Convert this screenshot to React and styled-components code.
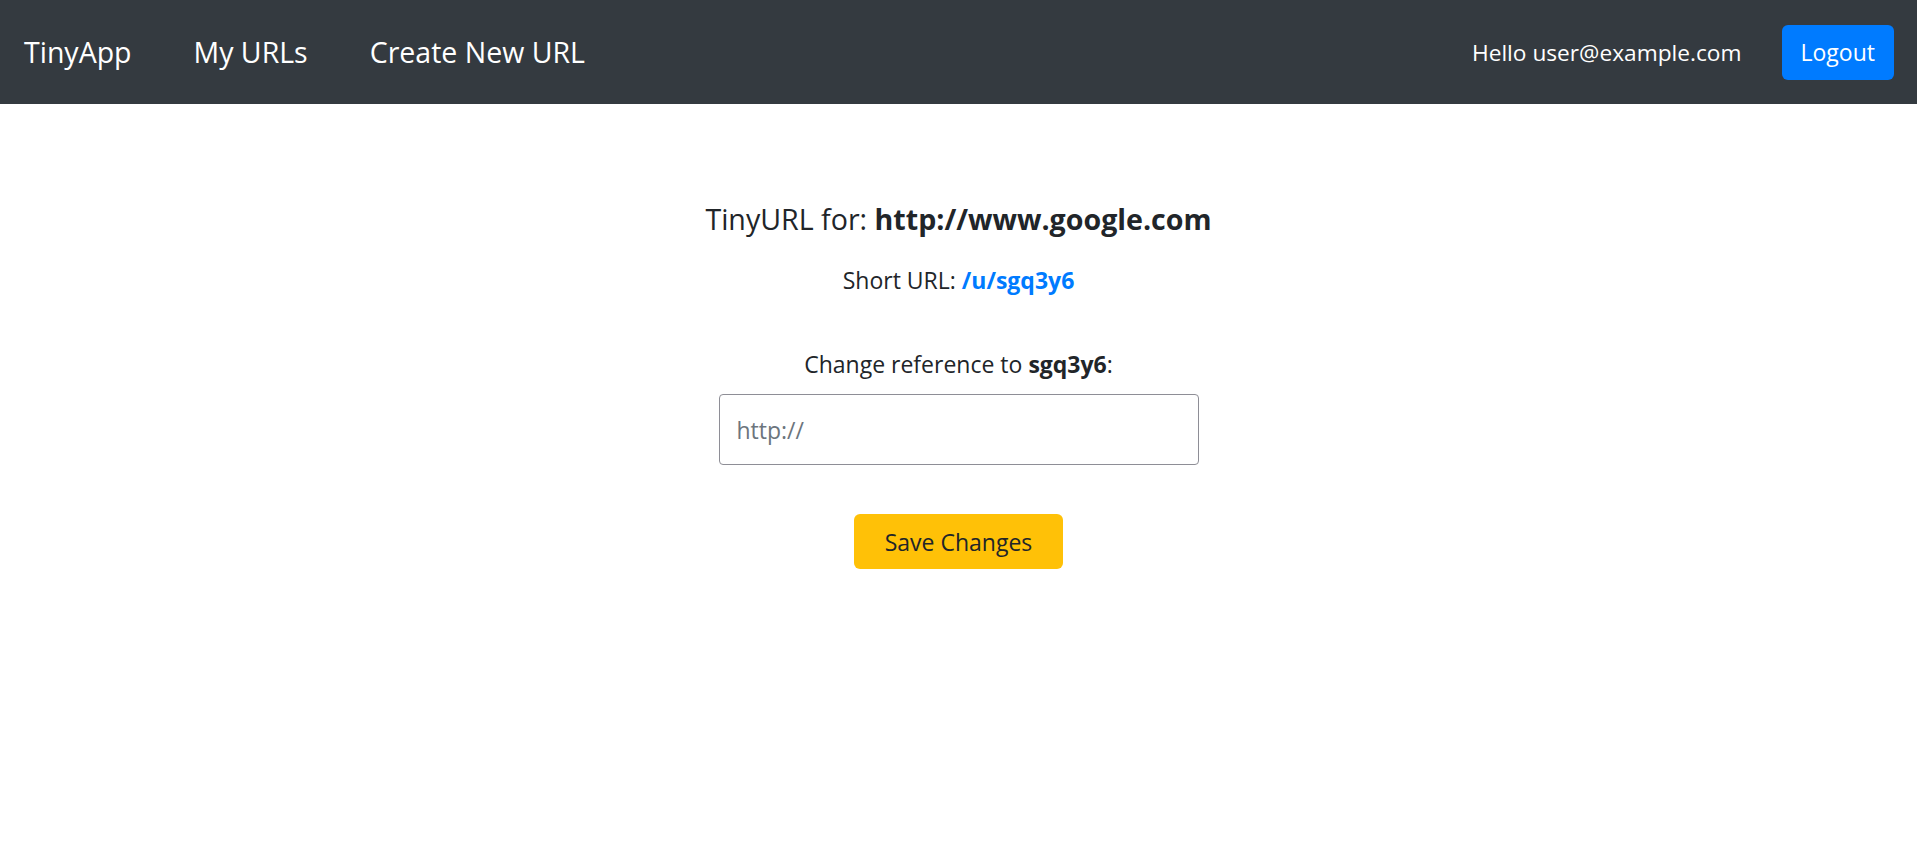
import React from 'react';
import styled, { createGlobalStyle } from 'styled-components';

const GlobalStyle = createGlobalStyle`
	html,
	body {
		margin: 0;
		padding: 0;
		background: #fff;
	}

	body {
		font-family: 'Open Sans', 'Noto Sans', sans-serif;
		color: #212529;
	}

	* {
		box-sizing: border-box;
	}
`;

const Navbar = styled.nav`
	display: flex;
	align-items: center;
	height: 104px;
	padding: 0 23px 0 24px;
	background: #343a40;
`;

const NavLinks = styled.div`
	display: flex;
	align-items: center;
	gap: 62px;
`;

const NavLink = styled.a`
	font-size: 28.5px;
	color: #fff;
	text-decoration: none;
`;

const NavRight = styled.div`
	display: flex;
	align-items: center;
	gap: 40px;
	margin-left: auto;
`;

const Greeting = styled.span`
	font-size: 22.7px;
	color: #fff;
`;

const Button = styled.button`
	font-family: inherit;
	font-size: 23px;
	border: none;
	border-radius: 6px;
	height: 55px;
	cursor: pointer;
	color: ${(p) => (p.$variant === 'warning' ? '#212529' : '#fff')};
	background: ${(p) => (p.$variant === 'warning' ? '#ffc107' : '#007bff')};
	padding: ${(p) => (p.$variant === 'warning' ? '0 31px' : '0 19px')};
`;

const Main = styled.main`
	display: flex;
	flex-direction: column;
	align-items: center;
	padding-top: 98px;
	text-align: center;
`;

const Heading = styled.h5`
	margin: 0;
	font-size: 28.6px;
	font-weight: 400;
	line-height: 1.2;

	b {
		font-weight: 700;
	}
`;

const ShortUrl = styled.p`
	margin: 28px 0 0;
	font-size: 23px;

	a {
		color: #007bff;
		font-weight: 700;
		text-decoration: none;
	}
`;

const Form = styled.form`
	display: flex;
	flex-direction: column;
	align-items: center;
	margin-top: 52px;
`;

const Label = styled.label`
	font-size: 23px;
	margin-bottom: 14px;

	b {
		font-weight: 700;
	}
`;

const Input = styled.input`
	width: 480px;
	height: 71px;
	padding: 0 17px;
	font-family: inherit;
	font-size: 23px;
	color: #495057;
	border: 1px solid #8e8e96;
	border-radius: 4px;
	margin-bottom: 49px;

	&::placeholder {
		color: #6c757d;
	}
`;

export default function App() {
	return (
		<>
			<GlobalStyle />
			<Navbar>
				<NavLinks>
					<NavLink href="#">TinyApp</NavLink>
					<NavLink href="#">My URLs</NavLink>
					<NavLink href="#">Create New URL</NavLink>
				</NavLinks>
				<NavRight>
					<Greeting>Hello user@example.com</Greeting>
					<Button type="button">Logout</Button>
				</NavRight>
			</Navbar>
			<Main>
				<Heading>
					TinyURL for: <b>http://www.google.com</b>
				</Heading>
				<ShortUrl>
					Short URL: <a href="#">/u/sgq3y6</a>
				</ShortUrl>
				<Form onSubmit={(e) => e.preventDefault()}>
					<Label htmlFor="longURL">
						Change reference to <b>sgq3y6</b>:
					</Label>
					<Input id="longURL" type="text" placeholder="http://" />
					<Button type="submit" $variant="warning">
						Save Changes
					</Button>
				</Form>
			</Main>
		</>
	);
}
